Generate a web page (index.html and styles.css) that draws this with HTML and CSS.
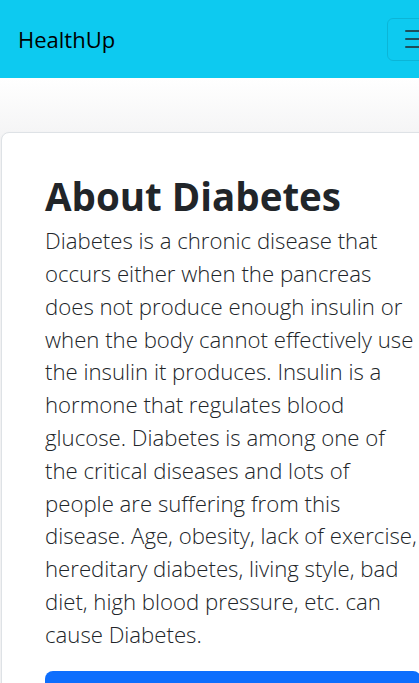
FILE: index.html
```html
<!DOCTYPE html>
<html lang="en">
<head>
<meta charset="utf-8">
<meta name="viewport" content="width=device-width, initial-scale=1">
<title>HealthUp</title>
<link rel="stylesheet" href="styles.css">
</head>
<body>
<nav class="navbar">
  <a class="brand" href="#">HealthUp</a>
  <button class="toggler" type="button" aria-label="Toggle navigation">
    <svg class="toggler-icon" viewBox="0 0 30 30" width="30" height="30"><path d="M4 7h22M4 15h22M4 23h22" stroke="rgba(33,37,41,0.75)" stroke-width="2" stroke-linecap="round" fill="none"/></svg>
  </button>
</nav>
<section class="hero">
  <div class="card">
    <h1 class="title">About Diabetes</h1>
    <p class="lead">Diabetes is a chronic disease that occurs either when the pancreas does not produce enough insulin or when the body cannot effectively use the insulin it produces. Insulin is a hormone that regulates blood glucose. Diabetes is among one of the critical diseases and lots of people are suffering from this disease. Age, obesity, lack of exercise, hereditary diabetes, living style, bad diet, high blood pressure, etc. can cause Diabetes.</p>
    <a class="btn" href="#">Learn More</a>
  </div>
</section>
</body>
</html>
```

FILE: styles.css
```css
html, body {
  margin: 0;
  overflow-x: hidden;
}
body {
  font-family: "Open Sans", "Noto Sans", sans-serif;
  color: #212529;
  background: #f4f4f5;
}
.navbar {
  height: 78px;
  background: #0dcaf0;
  display: flex;
  align-items: center;
  justify-content: space-between;
  padding: 0 0 0 18px;
  box-sizing: border-box;
  width: 480px;
}
.brand {
  font-size: 22px;
  color: #000;
  text-decoration: none;
  line-height: 1.5;
}
.toggler {
  width: 60px;
  height: 43px;
  margin-right: 33px;
  background: transparent;
  border: 1px solid rgba(0,0,0,0.1);
  border-radius: 6px;
  padding: 0 0 0 14px;
  display: flex;
  align-items: center;
}
.toggler-icon {
  display: block;
}
.hero {
  background: linear-gradient(#ffffff, #f4f4f5 60px);
  padding: 54px 0 0 1px;
}
.card {
  width: 460px;
  box-sizing: border-box;
  background: #fff;
  border: 1px solid #dee2e6;
  border-radius: 8px;
  padding: 40px 44px 40px 43px;
  box-shadow: 0 1px 3px rgba(0,0,0,0.04);
}
.title {
  margin: 0 0 6px;
  font-size: 38.5px;
  font-weight: 700;
  line-height: 1.2;
}
.lead {
  margin: 0 0 19px;
  font-size: 22.2px;
  font-weight: 300;
  line-height: 32.8px;
  width: 376px;
}
.btn {
  display: block;
  width: 376px;
  height: 60px;
  background: #0d6efd;
  border-radius: 8px;
  color: #fff;
  text-decoration: none;
  font-size: 20px;
  line-height: 60px;
  text-align: center;
}
```
